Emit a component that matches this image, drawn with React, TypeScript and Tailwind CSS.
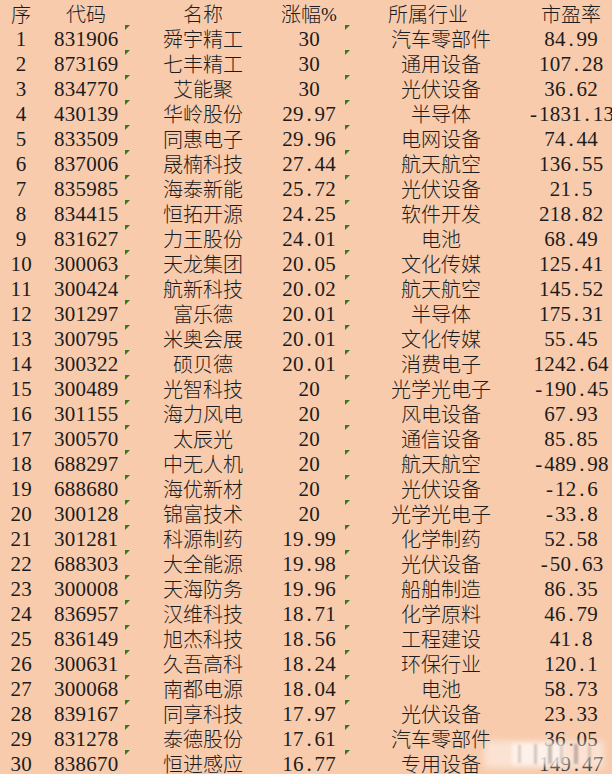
import React from "react";

type Row = [string, string, string, string, string, string];

const rows: Row[] = [
  ["1", "831906", "舜宇精工", "30", "汽车零部件", "84.99"],
  ["2", "873169", "七丰精工", "30", "通用设备", "107.28"],
  ["3", "834770", "艾能聚", "30", "光伏设备", "36.62"],
  ["4", "430139", "华岭股份", "29.97", "半导体", "-1831.13"],
  ["5", "833509", "同惠电子", "29.96", "电网设备", "74.44"],
  ["6", "837006", "晟楠科技", "27.44", "航天航空", "136.55"],
  ["7", "835985", "海泰新能", "25.72", "光伏设备", "21.5"],
  ["8", "834415", "恒拓开源", "24.25", "软件开发", "218.82"],
  ["9", "831627", "力王股份", "24.01", "电池", "68.49"],
  ["10", "300063", "天龙集团", "20.05", "文化传媒", "125.41"],
  ["11", "300424", "航新科技", "20.02", "航天航空", "145.52"],
  ["12", "301297", "富乐德", "20.01", "半导体", "175.31"],
  ["13", "300795", "米奥会展", "20.01", "文化传媒", "55.45"],
  ["14", "300322", "硕贝德", "20.01", "消费电子", "1242.64"],
  ["15", "300489", "光智科技", "20", "光学光电子", "-190.45"],
  ["16", "301155", "海力风电", "20", "风电设备", "67.93"],
  ["17", "300570", "太辰光", "20", "通信设备", "85.85"],
  ["18", "688297", "中无人机", "20", "航天航空", "-489.98"],
  ["19", "688680", "海优新材", "20", "光伏设备", "-12.6"],
  ["20", "300128", "锦富技术", "20", "光学光电子", "-33.8"],
  ["21", "301281", "科源制药", "19.99", "化学制药", "52.58"],
  ["22", "688303", "大全能源", "19.98", "光伏设备", "-50.63"],
  ["23", "300008", "天海防务", "19.96", "船舶制造", "86.35"],
  ["24", "836957", "汉维科技", "18.71", "化学原料", "46.79"],
  ["25", "836149", "旭杰科技", "18.56", "工程建设", "41.8"],
  ["26", "300631", "久吾高科", "18.24", "环保行业", "120.1"],
  ["27", "300068", "南都电源", "18.04", "电池", "58.73"],
  ["28", "839167", "同享科技", "17.97", "光伏设备", "23.33"],
  ["29", "831278", "泰德股份", "17.61", "汽车零部件", "36.05"],
  ["30", "838670", "恒进感应", "16.77", "专用设备", "149.47"],
];

function Num({ text }: { text: string }) {
  return (
    <span className="inline-flex whitespace-nowrap font-['Liberation_Serif',serif] text-[21px] leading-none">
      {text.split("").map((c, i) => (
        <span key={i} className="inline-block w-[10.75px] text-center">
          {c}
        </span>
      ))}
    </span>
  );
}

function Cjk({ text }: { text: string }) {
  return (
    <span className="whitespace-nowrap font-['Noto_Sans_CJK_SC',sans-serif] text-[20px] leading-none font-light">
      {text}
    </span>
  );
}

function Tri({ left }: { left: string }) {
  return (
    <span
      className={`absolute top-0 ${left} h-0 w-0 border-t-[5px] border-r-[5px] border-t-[#2f7d1f] border-r-transparent`}
    />
  );
}

const cell = "flex h-full shrink-0 items-center justify-center pt-[3px]";

export default function App() {
  return (
    <div className="relative h-[774px] w-[612px] overflow-hidden bg-[#F8CBAD] text-[#1c1c1c]">
      <div className="flex flex-col">
        <div className="relative flex h-[25px]">
          <div className={`${cell} w-[42px]`}>
            <Cjk text="序" />
          </div>
          <div className={`${cell} w-[88px]`}>
            <Cjk text="代码" />
          </div>
          <div className={`${cell} w-[146px]`}>
            <Cjk text="名称" />
          </div>
          <div className={`${cell} w-[66px]`}>
            <Cjk text="涨幅" />
            <span className="font-['Liberation_Serif',serif] text-[19px] leading-none">%</span>
          </div>
          <div className={`${cell} w-[198px] pr-[26px]`}>
            <Cjk text="所属行业" />
          </div>
          <div className={`${cell} w-[62px]`}>
            <Cjk text="市盈率" />
          </div>
        </div>
        {rows.map((r) => (
          <div key={r[0]} className="relative flex h-[25px]">
            <Tri left="left-[125px]" />
            <Tri left="left-[345px]" />
            <div className={`${cell} w-[42px]`}>
              <Num text={r[0]} />
            </div>
            <div className={`${cell} w-[88px]`}>
              <Num text={r[1]} />
            </div>
            <div className={`${cell} w-[146px]`}>
              <Cjk text={r[2]} />
            </div>
            <div className={`${cell} w-[66px]`}>
              <Num text={r[3]} />
            </div>
            <div className={`${cell} w-[198px]`}>
              <Cjk text={r[4]} />
            </div>
            <div className={`${cell} w-[62px]`}>
              <Num text={r[5]} />
            </div>
          </div>
        ))}
      </div>
      <div className="absolute left-[484px] top-[741px] h-[27px] w-[120px]">
        <div className="absolute inset-0 bg-white/45 blur-[3px]" />
        <div className="absolute left-[28px] top-[2px] h-[22px] w-[52px] bg-white/55 blur-[2px]" />
        <div className="absolute left-[34px] top-[4px] h-[18px] w-[3px] bg-[#b9a79b]/50 blur-[1px]" />
        <div className="absolute left-[50px] top-[3px] h-[20px] w-[3px] bg-[#a89689]/50 blur-[1px]" />
        <div className="absolute left-[64px] top-[3px] h-[20px] w-[4px] bg-[#a39285]/60 blur-[1px]" />
        <div className="absolute left-[76px] top-[4px] h-[18px] w-[3px] bg-[#b7a599]/50 blur-[1px]" />
        <div className="absolute left-[90px] top-[3px] h-[20px] w-[4px] bg-[#9c8b7f]/60 blur-[1px]" />
        <div className="absolute left-[104px] top-[5px] h-[16px] w-[3px] bg-[#b3a194]/50 blur-[1px]" />
      </div>
    </div>
  );
}
